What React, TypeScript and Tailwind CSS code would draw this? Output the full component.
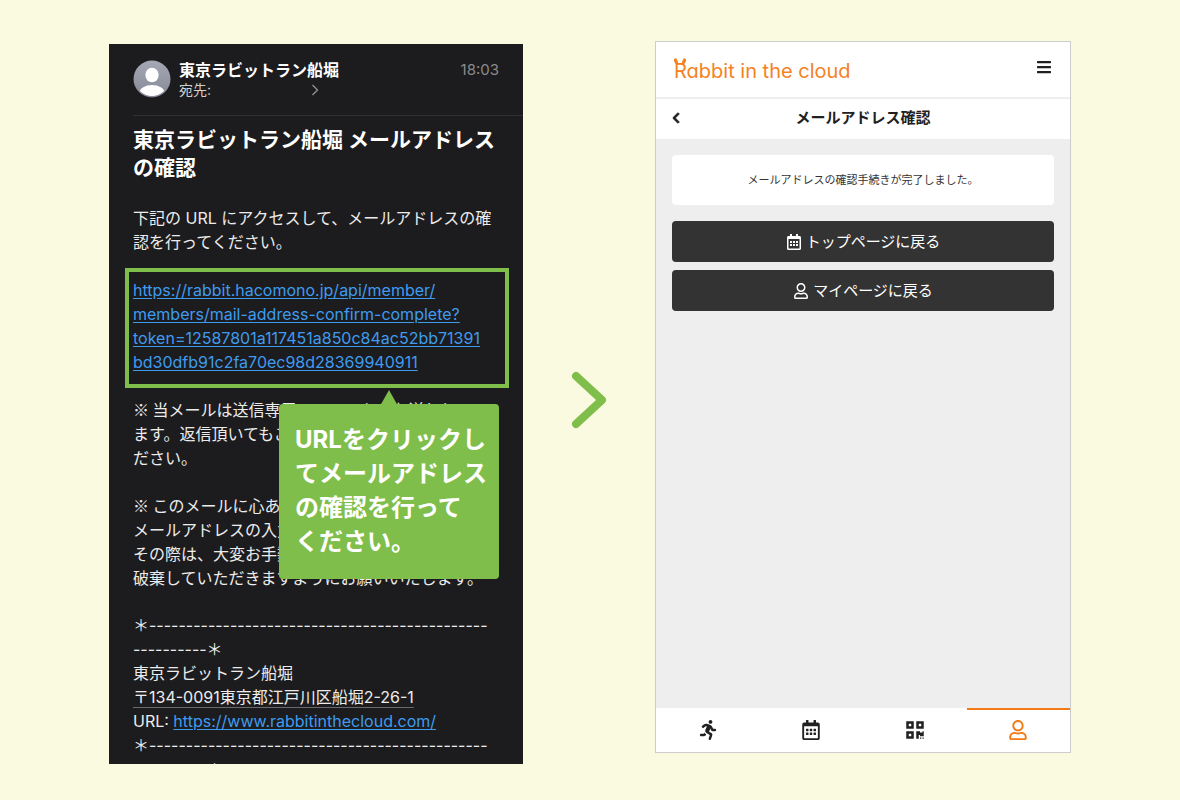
import { FaBars, FaChevronLeft, FaQrcode, FaRegCalendarAlt, FaRegUser, FaRunning } from "react-icons/fa"

const confirmUrl = [
  "https://rabbit.hacomono.jp/api/member/",
  "members/mail-address-confirm-complete?",
  "token=12587801a117451a850c84ac52bb71391",
  "bd30dfb91c2fa70ec98d28369940911",
]

const tabs = [
  { id: "run", label: "レッスン", icon: FaRunning, active: false },
  { id: "calendar", label: "予約", icon: FaRegCalendarAlt, active: false },
  { id: "qr", label: "QRコード", icon: FaQrcode, active: false },
  { id: "mypage", label: "マイページ", icon: FaRegUser, active: true },
]

function Lines({ items }: { items: string[] }) {
  return (
    <>
      {items.map((line, i) => (
        <span key={i} className="block whitespace-nowrap">
          {line}
        </span>
      ))}
    </>
  )
}

function Avatar() {
  return (
    <svg viewBox="0 0 38 38" className="size-[38px] shrink-0" aria-hidden="true">
      <defs>
        <linearGradient id="avatar" x1="0" y1="0" x2="0" y2="1">
          <stop offset="0" stopColor="#a5a9b5" />
          <stop offset="1" stopColor="#858995" />
        </linearGradient>
        <clipPath id="avatarClip">
          <circle cx="19" cy="19" r="17" />
        </clipPath>
      </defs>
      <circle cx="19" cy="19" r="18.5" fill="url(#avatar)" />
      <ellipse cx="19" cy="15" rx="6.6" ry="7.3" fill="#fff" />
      <ellipse cx="19" cy="32.5" rx="12.5" ry="7.5" fill="#fff" clipPath="url(#avatarClip)" />
    </svg>
  )
}

function Callout() {
  return (
    <div className="absolute top-[132px] right-1.5 w-[220px] rounded bg-[#7fbe4b] pt-[19px] pb-5 pl-4 text-2xl leading-[34px] font-bold text-white">
      <svg viewBox="0 0 18 16" className="absolute -top-3.5 left-[101px] h-4 w-[18px]" aria-hidden="true">
        <path d="M9 0 18 16H0Z" fill="#7fbe4b" />
      </svg>
      <Lines items={["URLをクリックし", "てメールアドレス", "の確認を行って", "ください。"]} />
    </div>
  )
}

function MailScreen() {
  return (
    <article className="mt-[3px] h-[90vh] overflow-hidden bg-[#1c1c1e] pt-4 pl-6 text-base leading-6 text-[#ececec]">
      <header className="flex gap-2 border-b border-[#303033] pr-6 pb-[15px]">
        <Avatar />
        <div className="flex-1">
          <p className="leading-5 font-bold text-white">東京ラビットラン船堀</p>
          <p className="flex items-center text-sm leading-5 text-[#d0d0d0]">
            宛先:
            <svg viewBox="0 0 8 12" className="ml-[100px] h-3 w-2" fill="none" stroke="#8e8e93" strokeWidth="1.4">
              <path d="M1.5 1 6.5 6l-5 5" />
            </svg>
          </p>
        </div>
        <time className="text-[15px] leading-5 text-[#8a8a8e]">18:03</time>
      </header>

      <div className="pt-2.5 pr-6">
        <h1 className="text-[21px] leading-7 font-bold text-white">
          <Lines items={["東京ラビットラン船堀 メールアドレス", "の確認"]} />
        </h1>

        <p className="mt-6">
          <Lines items={["下記の URL にアクセスして、メールアドレスの確", "認を行ってください。"]} />
        </p>

        <div className="relative mt-3.5 -mr-2.5 -ml-2 border-4 border-[#7fbe4b] px-1 pt-1.5 pb-2.5">
          <a href="#confirm" className="text-[#3f9bee] underline underline-offset-2">
            <Lines items={confirmUrl} />
          </a>
          <Callout />
        </div>

        <p className="mt-[9px] font-['Noto_Sans_CJK_JP',sans-serif]">
          <Lines items={["※ 当メールは送信専用アドレスからお送りしてい", "ます。返信頂いてもご回答できませんのでご了承く", "ださい。"]} />
        </p>

        <p className="mt-6 font-['Noto_Sans_CJK_JP',sans-serif]">
          <Lines
            items={[
              "※ このメールに心あたりがない場合は、",
              "メールアドレスの入力間違いの可能性があります。",
              "その際は、大変お手数ですが、このメールを",
              "破棄していただきますようにお願いいたします。",
            ]}
          />
        </p>

        {/* Signature */}
        <div className="mt-6">
          <Lines items={["＊" + "-".repeat(46), "-".repeat(10) + "＊"]} />
          <p>東京ラビットラン船堀</p>
          <p className="underline decoration-[#6a6a6e] underline-offset-4">〒134-0091東京都江戸川区船堀2-26-1</p>
          <p>
            URL:{" "}
            <a href="https://www.rabbitinthecloud.com/" className="text-[#3f9bee] underline underline-offset-2">
              https://www.rabbitinthecloud.com/
            </a>
          </p>
          <Lines items={["＊" + "-".repeat(46), "-".repeat(10) + "＊"]} />
        </div>
      </div>
    </article>
  )
}

function Logo() {
  return (
    <a href="#top" className="relative text-xl leading-6 text-[#f5821f] [font-feature-settings:'cv11']">
      <svg viewBox="0 0 14 8" className="absolute -top-px -left-px h-2 w-3.5" fill="#f5821f" aria-hidden="true">
        <ellipse cx="3" cy="3.4" rx="1.7" ry="3.2" transform="rotate(-22 3 3.4)" />
        <ellipse cx="11" cy="3.4" rx="1.7" ry="3.2" transform="rotate(22 11 3.4)" />
      </svg>
      Rabbit in the cloud
    </a>
  )
}

function AppScreen() {
  return (
    <section className="flex h-[89vh] flex-col border border-[#cccccc] bg-white text-[#212121]">
      <header className="flex items-center justify-between border-b-2 border-[#eeeeee] px-[18px] pt-[17px] pb-3.5">
        <Logo />
        <button type="button" aria-label="メニュー" className="-mt-2">
          <FaBars className="size-4" />
        </button>
      </header>

      <div className="grid h-10 shrink-0 grid-cols-[16px_1fr_16px] items-center px-3.5 pb-0.5">
        <button type="button" aria-label="戻る">
          <FaChevronLeft className="size-3 stroke-current [stroke-width:40]" />
        </button>
        <h2 className="text-center text-[15px] leading-5 font-bold">メールアドレス確認</h2>
      </div>

      <main className="flex-1 bg-[#eeeeee] p-4 text-center">
        <p className="mb-4 rounded bg-white py-4 text-[11px] leading-[18px] text-[#333333]">
          メールアドレスの確認手続きが完了しました。
        </p>
        <div className="flex flex-col gap-2 text-[15px] leading-[41px] text-white">
          <button type="button" className="flex items-center justify-center gap-1 rounded bg-[#333333]">
            <FaRegCalendarAlt className="size-4" />
            トップページに戻る
          </button>
          <button type="button" className="flex items-center justify-center gap-1 rounded bg-[#333333]">
            <FaRegUser className="size-4" />
            マイページに戻る
          </button>
        </div>
      </main>

      <nav className="grid h-11 shrink-0 grid-cols-4">
        {tabs.map(({ id, label, icon: Icon, active }) => (
          <a
            key={id}
            href={`#${id}`}
            aria-label={label}
            className={
              active
                ? "flex items-center justify-center border-t-2 border-[#f47a16] pb-0.5 text-[#f47a16]"
                : "flex items-center justify-center border-t-2 border-transparent pb-0.5"
            }
          >
            <Icon className="size-5" />
          </a>
        ))}
      </nav>
    </section>
  )
}

export default function App() {
  return (
    <div className="min-h-screen bg-[#fafae0] pt-[41px] font-[Inter,'Noto_Sans_CJK_JP',sans-serif]">
      <div className="mx-auto grid w-full max-w-[962px] grid-cols-[207fr_132px_208fr] items-start">
        <MailScreen />
        <svg viewBox="0 0 36 58" className="mb-1.5 h-[58px] w-9 self-center justify-self-center" aria-hidden="true">
          <path d="M5 5 31 29 5 53" fill="none" stroke="#7fbe4b" strokeWidth="8" strokeLinecap="round" strokeLinejoin="round" />
        </svg>
        <AppScreen />
      </div>
    </div>
  )
}
